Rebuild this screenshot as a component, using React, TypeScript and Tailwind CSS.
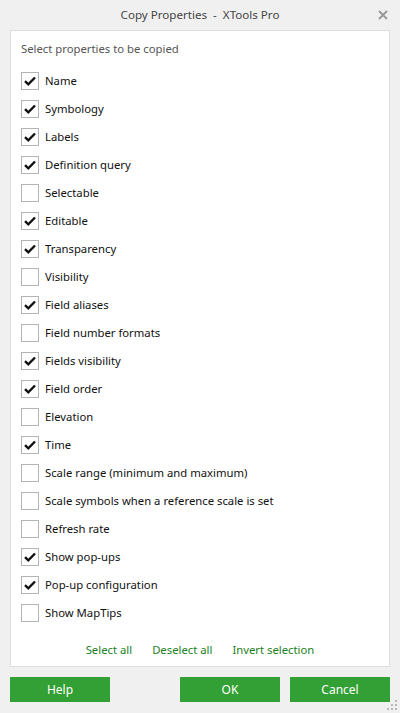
import React, { useState } from 'react';

const initial: [string, boolean][] = [
  ['Name', true],
  ['Symbology', true],
  ['Labels', true],
  ['Definition query', true],
  ['Selectable', false],
  ['Editable', true],
  ['Transparency', true],
  ['Visibility', false],
  ['Field aliases', true],
  ['Field number formats', false],
  ['Fields visibility', true],
  ['Field order', true],
  ['Elevation', false],
  ['Time', true],
  ['Scale range (minimum and maximum)', false],
  ['Scale symbols when a reference scale is set', false],
  ['Refresh rate', false],
  ['Show pop-ups', true],
  ['Pop-up configuration', true],
  ['Show MapTips', false],
];

function Check({ on }: { on: boolean }) {
  return (
    <div className="w-[18px] h-[18px] border border-[#b4b4b4] bg-white flex items-center justify-center shrink-0">
      {on && (
        <svg width="12" height="10" viewBox="0 0 12 10">
          <path d="M1 5.2 L4.3 8.3 L11 1.5" fill="none" stroke="#111" strokeWidth="2.4" />
        </svg>
      )}
    </div>
  );
}

export default function App() {
  const [items, setItems] = useState(initial);
  const toggle = (i: number) =>
    setItems((prev) => prev.map((it, j) => (j === i ? [it[0], !it[1]] : it)));

  return (
    <div
      className="w-[400px] h-[713px] bg-[#f0f0f0] flex flex-col relative overflow-hidden"
      style={{ fontFamily: '"Noto Sans", "Open Sans", sans-serif' }}
    >
      {/* Title bar */}
      <div className="h-[30px] flex items-center justify-center relative text-[11.6px] text-[#444]">
        <span className="whitespace-pre">Copy Properties  -  XTools Pro</span>
        <svg className="absolute right-[12px] top-[10px]" width="10" height="10" viewBox="0 0 10 10">
          <path d="M1 1 L9 9 M9 1 L1 9" stroke="#9a9a9a" strokeWidth="2" />
        </svg>
      </div>

      {/* Panel */}
      <div className="mx-[10px] h-[637px] bg-white border border-[#dedede] flex flex-col px-[10px]">
        <div className="text-[11.3px] text-[#555] mt-[9px] h-[18px] leading-[18px]">
          Select properties to be copied
        </div>
        <div className="flex flex-col mt-[9px]">
          {items.map(([label, on], i) => (
            <div
              key={label}
              className="h-[28px] flex items-center gap-[6px] cursor-default"
              onClick={() => toggle(i)}
            >
              <Check on={on} />
              <span className="text-[11.3px] text-[#111]">{label}</span>
            </div>
          ))}
        </div>
        <div className="flex justify-center gap-[20px] mt-[15px] text-[11.3px] text-[#1d7f1d]">
          <span>Select all</span>
          <span>Deselect all</span>
          <span>Invert selection</span>
        </div>
      </div>

      {/* Buttons */}
      <div className="flex px-[10px] mt-[10px] gap-[10px] text-[12px] text-white">
        <button className="w-[100px] h-[25px] bg-[#33a035]">Help</button>
        <div className="flex-1" />
        <button className="w-[100px] h-[25px] bg-[#33a035]">OK</button>
        <button className="w-[100px] h-[25px] bg-[#33a035]">Cancel</button>
      </div>

      {/* Resize grip */}
      <svg className="absolute right-[1px] bottom-[1px]" width="12" height="12" viewBox="0 0 12 12">
        <g fill="#b8b8b8">
          <rect x="8" y="0" width="2" height="2" />
          <rect x="4" y="4" width="2" height="2" />
          <rect x="8" y="4" width="2" height="2" />
          <rect x="0" y="8" width="2" height="2" />
          <rect x="4" y="8" width="2" height="2" />
          <rect x="8" y="8" width="2" height="2" />
        </g>
      </svg>
    </div>
  );
}
